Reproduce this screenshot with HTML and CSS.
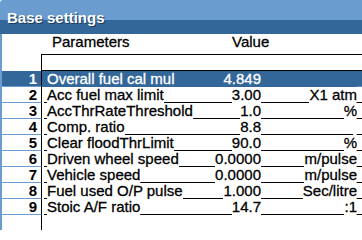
FILE: index.html
```html
<!DOCTYPE html>
<html>
<head>
<meta charset="utf-8">
<link rel="stylesheet" href="styles.css">
</head>
<body>
<div class="win">
  <div class="title"><span class="title-text">Base settings</span></div>
  <div class="body">
    <div class="head">
      <span class="h-param">Parameters</span>
      <span class="h-value">Value</span>
    </div>
    <div class="grid">
      <div class="row blank"><div class="num"></div><div class="data"></div></div>

      <div class="row sel">
        <div class="num">1</div>
        <div class="data">
          <div class="c1"><span class="lead">_</span><span class="name">Overall fuel cal mul</span><span class="fill">______________________________________</span><span class="val">4.849</span></div>
          <div class="c2"><span class="fill">________________________</span><span class="unit">&nbsp;</span></div>
          <div class="c3">_</div>
        </div>
      </div>

      <div class="row">
        <div class="num">2</div>
        <div class="data">
          <div class="c1"><span class="lead">_</span><span class="name">Acc fuel max limit</span><span class="fill">______________________________________</span><span class="val">3.00</span></div>
          <div class="c2"><span class="fill">________________________</span><span class="unit">X1 atm</span></div>
          <div class="c3">_</div>
        </div>
      </div>

      <div class="row">
        <div class="num">3</div>
        <div class="data">
          <div class="c1"><span class="lead">_</span><span class="name">AccThrRateThreshold</span><span class="fill">______________________________________</span><span class="val">1.0</span></div>
          <div class="c2"><span class="fill">________________________</span><span class="unit">%</span></div>
          <div class="c3">_</div>
        </div>
      </div>

      <div class="row">
        <div class="num">4</div>
        <div class="data">
          <div class="c1"><span class="lead">_</span><span class="name">Comp. ratio</span><span class="fill">______________________________________</span><span class="val">8.8</span></div>
          <div class="c2"><span class="fill">________________________</span><span class="unit">&nbsp;</span></div>
          <div class="c3">_</div>
        </div>
      </div>

      <div class="row">
        <div class="num">5</div>
        <div class="data">
          <div class="c1"><span class="lead">_</span><span class="name">Clear floodThrLimit</span><span class="fill">______________________________________</span><span class="val">90.0</span></div>
          <div class="c2"><span class="fill">________________________</span><span class="unit">%</span></div>
          <div class="c3">_</div>
        </div>
      </div>

      <div class="row">
        <div class="num">6</div>
        <div class="data">
          <div class="c1"><span class="lead">_</span><span class="name">Driven wheel speed</span><span class="fill">______________________________________</span><span class="val">0.0000</span></div>
          <div class="c2"><span class="fill">________________________</span><span class="unit">m/pulse</span></div>
          <div class="c3">_</div>
        </div>
      </div>

      <div class="row">
        <div class="num">7</div>
        <div class="data">
          <div class="c1"><span class="lead">_</span><span class="name">Vehicle speed</span><span class="fill">______________________________________</span><span class="val">0.0000</span></div>
          <div class="c2"><span class="fill">________________________</span><span class="unit">m/pulse</span></div>
          <div class="c3">_</div>
        </div>
      </div>

      <div class="row">
        <div class="num">8</div>
        <div class="data">
          <div class="c1"><span class="lead">_</span><span class="name">Fuel used O/P pulse</span><span class="fill">______________________________________</span><span class="val">1.000</span></div>
          <div class="c2"><span class="fill">________________________</span><span class="unit">Sec/litre</span></div>
          <div class="c3">_</div>
        </div>
      </div>

      <div class="row">
        <div class="num">9</div>
        <div class="data">
          <div class="c1"><span class="lead">_</span><span class="name">Stoic A/F ratio</span><span class="fill">______________________________________</span><span class="val">14.7</span></div>
          <div class="c2"><span class="fill">________________________</span><span class="unit">:1</span></div>
          <div class="c3">_</div>
        </div>
      </div>

      <div class="row rest"><div class="num"></div><div class="data"></div></div>
    </div>
  </div>
</div>
</body>
</html>
```

FILE: styles.css
```css
html, body {
  margin: 0;
  padding: 0;
  background: #ffffff;
}

.win {
  width: 362px;
  height: 230px;
  overflow: hidden;
  display: flex;
  flex-direction: column;
  font-family: "Liberation Sans", Arial, sans-serif;
  color: #000;
}

.title {
  height: 34px;
  flex: none;
  box-sizing: border-box;
  padding: 10px 0 0 7px;
  background: linear-gradient(#6a9ccf 0, #6a9ccf 20px, #336699 20px, #336699 100%);
  border-top-left-radius: 3px;
}

.title-text {
  display: block;
  font-size: 15px;
  font-weight: bold;
  line-height: 15px;
  color: #ffffff;
  text-shadow: 1px 1px 0 #1d3d5e;
}

.body {
  flex: 1;
  display: flex;
  flex-direction: column;
  border-left: 2px solid #6a9ccf;
  background: #fff;
  min-height: 0;
}

.head {
  height: 20px;
  flex: none;
  font-size: 15px;
  line-height: 16px;
  display: flex;
  -webkit-text-stroke: 0.3px currentColor;
}

.h-param {
  margin-left: 50px;
  width: 180px;
}

.grid {
  flex: 1;
  display: flex;
  flex-direction: column;
  min-height: 0;
}

.row {
  display: flex;
  height: 16px;
  flex: none;
  font-size: 15px;
  line-height: 15px;
  white-space: nowrap;
  -webkit-text-stroke: 0.3px currentColor;
}

.num {
  width: 40px;
  flex: none;
  box-sizing: border-box;
  text-align: right;
  padding-right: 4px;
  border-bottom: 1px solid #6a9ccf;
  border-right: 1px solid #000;
  height: 16px;
  font-weight: bold;
  -webkit-text-stroke: 0;
}

.data {
  flex: 1;
  display: flex;
  padding-left: 2px;
  overflow: hidden;
  height: 16px;
}

.blank {
  height: 17px;
}

.blank .num {
  border-bottom: none;
  height: 17px;
}

.blank .data {
  height: 17px;
  box-sizing: border-box;
  border-top: 1px solid #000;
  border-bottom: 1px solid #000;
}

.rest {
  flex: 1;
  height: auto;
}

.rest .num {
  border-bottom: none;
  height: auto;
}

.c1 {
  width: 217px;
  flex: none;
  display: flex;
}

.c2 {
  width: 96px;
  flex: none;
  display: flex;
}

.c3 {
  flex: none;
}

.lead {
  width: 3px;
  overflow: hidden;
  flex: none;
}

.name {
  flex: none;
}

.fill {
  flex: 1;
  overflow: hidden;
  min-width: 0;
}

.val, .unit {
  flex: none;
}

.sel .num,
.sel .data {
  background: #336699;
  color: #ffffff;
}

.sel .lead,
.sel .fill {
  visibility: hidden;
}

.sel .c3 {
  color: #5f8fc2;
}
```
